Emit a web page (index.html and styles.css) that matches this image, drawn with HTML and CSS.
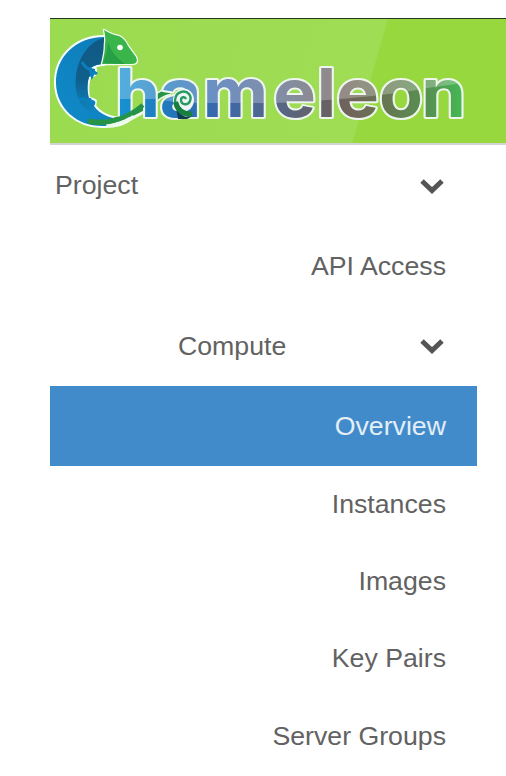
FILE: index.html
```html
<!DOCTYPE html>
<html lang="en">
<head>
<meta charset="utf-8">
<title>Chameleon</title>
<link rel="stylesheet" href="styles.css">
</head>
<body>
<header class="banner">
<svg class="logo" viewBox="50 19 456 125" role="img" aria-label="Chameleon">
  <defs>
    <linearGradient id="rainbow" gradientUnits="userSpaceOnUse" x1="108" y1="0" x2="430" y2="0">
      <stop offset="0" stop-color="#1594d3"/>
      <stop offset=".17" stop-color="#2374b9"/>
      <stop offset=".3" stop-color="#3b67ac"/>
      <stop offset=".43" stop-color="#506891"/>
      <stop offset=".6" stop-color="#666166"/>
      <stop offset=".68" stop-color="#70645a"/>
      <stop offset=".8" stop-color="#657a51"/>
      <stop offset=".92" stop-color="#549552"/>
      <stop offset="1" stop-color="#45b653"/>
    </linearGradient>
    <pattern id="gloss" patternUnits="userSpaceOnUse" x="0" y="0" width="520" height="160">
      <rect width="520" height="160" fill="url(#rainbow)"/>
      <path d="M0 0H520V76Q425 82 390 90Q330 100 255 103H170L145 99H0Z" fill="#fff" opacity=".26"/>
    </pattern>
    <linearGradient id="skin" x1="0" y1="1" x2="1" y2="0">
      <stop offset="0" stop-color="#118bc9"/>
      <stop offset="1" stop-color="#0c78b6"/>
    </linearGradient>
    <linearGradient id="belly" x1="0" y1="0" x2="0" y2="1">
      <stop offset="0" stop-color="#105a84"/>
      <stop offset=".55" stop-color="#0f5f8c"/>
      <stop offset="1" stop-color="#0f84c0"/>
    </linearGradient>
  </defs>
  <path class="body-shape" d="M104 37C76 37 55 57 56 84C57 109 78 127 104 126C117 126 126 123 132 117C116 121 102 117 94 106L95 101L88 98C87 91 87 83 89 77L95 74L95 69L91 68Q96 64 104 64Z" fill="url(#skin)"/>
  <path d="M104 38C90 41 78 57 76 76C74 93 79 106 90 112L94 107L89 98C87 91 87 83 89 77L94 72L90 68Q96 64 104 64Z" fill="url(#belly)"/>
  <path d="M82 62Q86 69 90 69L92 76L94 72L97 74M79 99Q86 99 89 102L90 98M90 102L95 104" fill="none" stroke="#0c80bd" stroke-width="3"/>
  <path class="tail-edge" d="M106 124C128 120 139 113 148 105C155 99 160 93 170 91"/>
  <path d="M88 121Q102 125 118 119Q136 113 148 105C155 99 160 93 170 91" fill="none" stroke="#269447" stroke-width="5"/>
  <text class="wordmark" y="117.5" x="108 149.300 189.500 255.500 296 314.200 354.200 393.700" transform="scale(1.07 1)" fill="url(#gloss)">hameleon</text>
  <path d="M88 121Q104 124 119 119Q131 115 143 105" fill="none" stroke="#269447" stroke-width="4.500"/>
  <path d="M104 30Q112 35 119 36Q125 39 128 46L136 57Q139 64 132 64H102Q105 53 105 44Q106 38 104 30Z" fill="#39b54a" stroke="#f2fff0" stroke-width="2.500" stroke-linejoin="round" paint-order="stroke"/>
  <path d="M103 63Q107 53 108 43Q113 55 121 61L125 64Z" fill="#1e9546" opacity=".7"/>
  <circle cx="120" cy="47.500" r="2.800" fill="white"/>
  <ellipse cx="183.500" cy="100" rx="10.500" ry="11.500" fill="#eef5f7"/>
  <path d="M176 106Q180 120 193 116L187 119H178Z" fill="#103d55"/>
  <path d="M179 111C173 104 174 94 181 92C188 90 192 96 190 101C188 106 181 105 181 100C181 97 185 96 186 99" fill="none" stroke="#289a60" stroke-width="2.400"/>
  <path d="M175.500 102Q179 115 192 114" fill="none" stroke="#18803e" stroke-width="5"/>
</svg>
</header>
<nav class="sidebar">
  <a class="item group project">Project<svg class="chevron" viewBox="0 0 26 18"><path d="M3 4L13 13.500L23 4"/></svg></a>
  <a class="item api">API Access</a>
  <a class="item group compute">Compute<svg class="chevron" viewBox="0 0 26 18"><path d="M3 4L13 13.500L23 4"/></svg></a>
  <a class="item active">Overview</a>
  <a class="item leaf">Instances</a>
  <a class="item leaf">Images</a>
  <a class="item leaf">Key Pairs</a>
  <a class="item leaf">Server Groups</a>
</nav>
</body>
</html>
```
FILE: styles.css
```css
* { box-sizing: border-box; }
body {
  margin: 0;
  padding: 18px 0 0 50px;
  height: 776px;
  overflow: hidden;
  background: #fff;
  color: #626262;
  font-family: "Liberation Sans", Arial, sans-serif;
  font-size: 26.7px;
}
.banner {
  height: 127px;
  border-top: 1px solid #293720;
  border-bottom: 2px solid #d2d3d4;
  background: linear-gradient(106deg, #9bdb50 0%, #9fdd54 68.500%, #96d83e 69%, #96d83e 100%);
}
.logo { display: block; width: 456px; height: 125px; }
.body-shape {
  stroke: #f4fcff;
  stroke-width: 4px;
  stroke-linejoin: round;
  paint-order: stroke;
}
.tail-edge { fill: none; stroke: #edf9eb; stroke-width: 8px; }
.wordmark {
  font-family: Inter, sans-serif;
  font-size: 67px;
  font-weight: 700;
  stroke: #eef4ee;
  stroke-width: 4px;
  paint-order: stroke;
  stroke-linejoin: round;
}
.sidebar {
  display: flex;
  flex-direction: column;
  width: 427px;
}
.item {
  display: flex;
  align-items: center;
  justify-content: flex-end;
  height: 80px;
  flex-shrink: 0;
  padding: 0 31px 0 5px;
}
.group { justify-content: space-between; }
.project { height: 81px; }
.compute { padding-left: 128px; }
.active { background: #428bca; color: #e4eef7; }
.leaf { height: 77.200px; }
.chevron { width: 26px; height: 18px; margin-right: 1px; }
.chevron path { fill: none; stroke: #555; stroke-width: 5px; }
```
